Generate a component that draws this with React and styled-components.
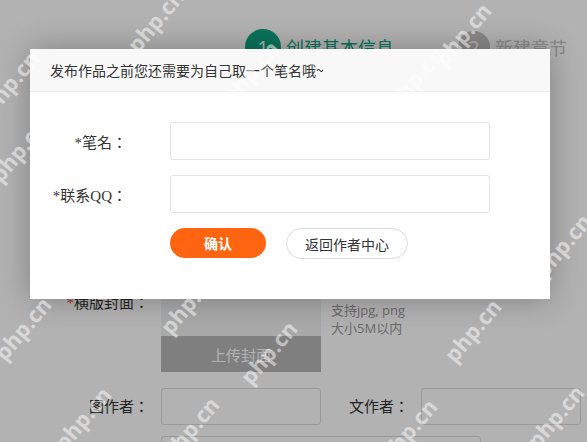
import React from "react";
import styled, { createGlobalStyle } from "styled-components";

const GlobalStyle = createGlobalStyle`
  html, body {
    margin: 0;
    padding: 0;
    background: #fff;
    font-family: "Noto Sans CJK SC", "Noto Sans", sans-serif;
    overflow: hidden;
  }
  * { box-sizing: border-box; }
`;

const Page = styled.div`
  position: relative;
  width: 587px;
  height: 442px;
  overflow: hidden;
  background: #fff;
`;

const Steps = styled.div`
  display: flex;
  align-items: center;
  gap: 64px;
  padding: 29px 0 0 245px;
`;

const Step = styled.div`
  display: flex;
  align-items: center;
  gap: 5px;
  font-size: 18px;
  color: ${(p) => (p.$active ? "#0fa582" : "#c4c4c4")};
`;

const StepNum = styled.span`
  width: ${(p) => (p.$active ? 36 : 32)}px;
  height: ${(p) => (p.$active ? 36 : 32)}px;
  border-radius: 50%;
  background: ${(p) => (p.$active ? "#0fa582" : "#c4c4c4")};
  color: #fff;
  display: flex;
  align-items: center;
  justify-content: center;
  font-size: 20px;
  font-family: "Open Sans", sans-serif;
`;

const Form = styled.div`
  display: flex;
  flex-direction: column;
  gap: 16px;
  padding-top: 229px;
`;

const Row = styled.div`
  display: grid;
  grid-template-columns: 161px 160px 100px 160px;
  align-items: ${(p) => (p.$top ? "start" : "center")};
  margin-top: ${(p) => p.$pull || 0}px;
`;

const Label = styled.div`
  text-align: right;
  padding-right: 12px;
  font-family: "Liberation Serif", "Noto Sans CJK TC", serif;
  font-size: 15px;
  line-height: 18px;
  color: #333;
  white-space: nowrap;
`;

const Star = styled.span`
  color: #e33;
`;

const Upload = styled.div`
  display: flex;
  flex-direction: column;
  justify-content: flex-end;
  width: 160px;
  height: 78px;
  background: #f2f2f2;
`;

const UploadBtn = styled.div`
  height: 36px;
  background: #b7b7b7;
  color: #fff;
  font-size: 15px;
  display: flex;
  align-items: center;
  justify-content: center;
`;

const Tip = styled.div`
  grid-column: 3 / span 2;
  padding: 7px 0 0 10px;
  font-size: 13px;
  line-height: 18px;
  color: #999;
  font-family: "Open Sans", "Noto Sans CJK SC", sans-serif;
`;

const PageInput = styled.div`
  width: ${(p) => p.$w || 160}px;
  height: 37px;
  border: 1px solid #dcdcdc;
  border-radius: 3px;
`;

const Mask = styled.div`
  position: absolute;
  inset: 0;
  background: rgba(0, 0, 0, 0.3);
`;

const Modal = styled.div`
  position: absolute;
  left: 30px;
  top: 49px;
  width: 520px;
  height: 250px;
  background: #fff;
  box-shadow: 0 0 30px rgba(0, 0, 0, 0.28);
`;

const ModalHead = styled.div`
  height: 43px;
  padding-left: 20px;
  display: flex;
  align-items: center;
  background: #f8f8f8;
  border-bottom: 1px solid #ececec;
  font-size: 14px;
  color: #333;
`;

const ModalBody = styled.div`
  display: flex;
  flex-direction: column;
  gap: 15px;
  padding-top: 30px;
`;

const Field = styled.div`
  display: grid;
  grid-template-columns: 97px 320px;
  column-gap: 43px;
  align-items: center;
`;

const FieldLabel = styled.label`
  text-align: right;
  font-family: "Liberation Serif", "Noto Sans CJK TC", serif;
  font-size: 15px;
  color: #333;
  white-space: nowrap;
`;

const Input = styled.input`
  width: 320px;
  height: 38px;
  border: 1px solid #e3e3e3;
  border-radius: 3px;
  outline: none;
  padding: 0 10px;
`;

const Buttons = styled.div`
  display: flex;
  gap: 20px;
  padding-left: 140px;
`;

const Button = styled.button`
  width: ${(p) => p.$w}px;
  height: ${(p) => (p.$primary ? 30 : 31)}px;
  border-radius: 16px;
  border: ${(p) => (p.$primary ? "none" : "1px solid #dcdcdc")};
  background: ${(p) => (p.$primary ? "#ff6510" : "#fff")};
  color: ${(p) => (p.$primary ? "#fff" : "#333")};
  font-family: "Noto Sans CJK SC", sans-serif;
  font-size: 14px;
  font-weight: ${(p) => (p.$primary ? 700 : 400)};
  padding: 0;
  cursor: pointer;
`;

const Mark = styled.div`
  position: absolute;
  width: 80px;
  height: 30px;
  margin: -15px 0 0 -40px;
  display: flex;
  align-items: center;
  justify-content: center;
  pointer-events: none;
  font-family: "Open Sans", sans-serif;
  font-weight: 700;
  font-size: 22px;
  color: rgba(255, 255, 255, 0.5);
  transform: rotate(-50deg);
  white-space: nowrap;
`;

// watermark centres
const marks = [
  [155, 20],
  [10, 82],
  [462, 34],
  [250, 72],
  [415, 78],
  [18, 150],
  [562, 245],
  [22, 328],
  [188, 302],
  [268, 352],
  [472, 330],
  [82, 418],
  [190, 428],
  [408, 430],
  [555, 416],
];

export default function App() {
  return (
    <Page>
      <GlobalStyle />
      <Steps>
        <Step $active>
          <StepNum $active>1</StepNum>
          创建基本信息
        </Step>
        <Step>
          <StepNum>2</StepNum>
          新建章节
        </Step>
      </Steps>

      <Form>
        <Row $top>
          <Label>
            <Star>*</Star>横版封面：
          </Label>
          <Upload>
            <UploadBtn>上传封面</UploadBtn>
          </Upload>
          <Tip>
            支持jpg, png
            <br />
            大小5M以内
          </Tip>
        </Row>
        <Row>
          <Label>图作者：</Label>
          <PageInput />
          <Label>文作者：</Label>
          <PageInput />
        </Row>
        <Row $pull={-5}>
          <Label />
          <PageInput $w={320} />
        </Row>
      </Form>

      <Mask />

      <Modal>
        <ModalHead>发布作品之前您还需要为自己取一个笔名哦~</ModalHead>
        <ModalBody>
          <Field>
            <FieldLabel>*笔名：</FieldLabel>
            <Input />
          </Field>
          <Field>
            <FieldLabel>*联系QQ：</FieldLabel>
            <Input />
          </Field>
          <Buttons>
            <Button $primary $w={96}>确认</Button>
            <Button $w={122}>返回作者中心</Button>
          </Buttons>
        </ModalBody>
      </Modal>

      {marks.map(([x, y], i) => (
        <Mark key={i} style={{ left: x, top: y }}>
          php.cn
        </Mark>
      ))}
    </Page>
  );
}
